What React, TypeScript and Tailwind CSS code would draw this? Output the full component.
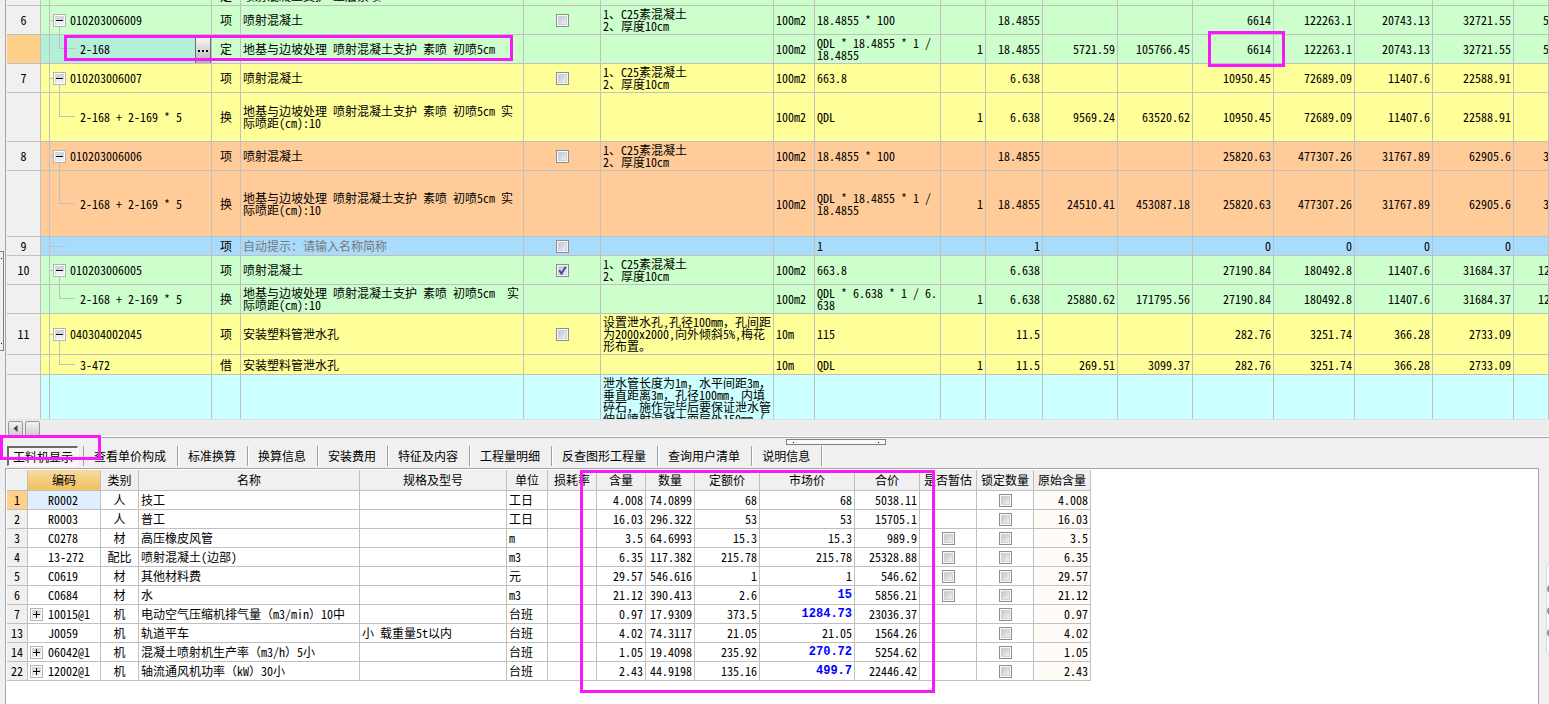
import React from "react";

type Tone = "green" | "yellow" | "orange" | "blue" | "cyan";

interface BillRow {
  no: string;
  tone: Tone;
  height: string;
  code: string;
  level: "parent" | "child" | "hint" | "none";
  kind: string;
  name: string;
  check?: boolean;
  hasCheck?: boolean;
  spec?: string;
  unit?: string;
  expr?: string;
  ratio?: string;
  qty?: string;
  nums: string[];
  tail?: string;
  selected?: boolean;
}

const tones: Record<Tone, string> = {
  green: "bg-[#ccffcc]",
  yellow: "bg-[#ffff99]",
  orange: "bg-[#ffcc99]",
  blue: "bg-[#a9dbfb]",
  cyan: "bg-[#ccffff]",
};

const concreteSpec = "1、C25素混凝土\n2、厚度10cm";
const shotcrete = "地基与边坡处理 喷射混凝土支护 素喷 初喷5㎝";

const billRows: BillRow[] = [
  { no: "", tone: "green", height: "h-5", code: "", level: "none", kind: "定", name: "喷射混凝土支护 土层素喷", nums: [] },
  { no: "6", tone: "green", height: "h-[29px]", code: "010203006009", level: "parent", kind: "项", name: "喷射混凝土", hasCheck: true, spec: concreteSpec, unit: "100m2", expr: "18.4855 * 100", qty: "18.4855", nums: ["", "", "6614", "122263.1", "20743.13", "32721.55"], tail: "5" },
  { no: "", tone: "green", height: "h-[29px]", code: "2-168", level: "child", kind: "定", name: shotcrete, unit: "100m2", expr: "QDL * 18.4855 * 1 /\n18.4855", ratio: "1", qty: "18.4855", nums: ["5721.59", "105766.45", "6614", "122263.1", "20743.13", "32721.55"], tail: "5", selected: true },
  { no: "7", tone: "yellow", height: "h-[29px]", code: "010203006007", level: "parent", kind: "项", name: "喷射混凝土", hasCheck: true, spec: concreteSpec, unit: "100m2", expr: "663.8", qty: "6.638", nums: ["", "", "10950.45", "72689.09", "11407.6", "22588.91"] },
  { no: "", tone: "yellow", height: "h-[49px]", code: "2-168 + 2-169 * 5", level: "child", kind: "换", name: shotcrete + " 实\n际喷距(cm):10", unit: "100m2", expr: "QDL", ratio: "1", qty: "6.638", nums: ["9569.24", "63520.62", "10950.45", "72689.09", "11407.6", "22588.91"] },
  { no: "8", tone: "orange", height: "h-[29px]", code: "010203006006", level: "parent", kind: "项", name: "喷射混凝土", hasCheck: true, spec: concreteSpec, unit: "100m2", expr: "18.4855 * 100", qty: "18.4855", nums: ["", "", "25820.63", "477307.26", "31767.89", "62905.6"], tail: "3" },
  { no: "", tone: "orange", height: "h-[66px]", code: "2-168 + 2-169 * 5", level: "child", kind: "换", name: shotcrete + " 实\n际喷距(cm):10", unit: "100m2", expr: "QDL * 18.4855 * 1 /\n18.4855", ratio: "1", qty: "18.4855", nums: ["24510.41", "453087.18", "25820.63", "477307.26", "31767.89", "62905.6"], tail: "3" },
  { no: "9", tone: "blue", height: "h-[19px]", code: "", level: "hint", kind: "项", name: "自动提示：请输入名称简称", hasCheck: true, expr: "1", qty: "1", nums: ["", "", "0", "0", "0", "0"] },
  { no: "10", tone: "green", height: "h-[29px]", code: "010203006005", level: "parent", kind: "项", name: "喷射混凝土", hasCheck: true, check: true, spec: concreteSpec, unit: "100m2", expr: "663.8", qty: "6.638", nums: ["", "", "27190.84", "180492.8", "11407.6", "31684.37"], tail: "12" },
  { no: "", tone: "green", height: "h-[29px]", code: "2-168 + 2-169 * 5", level: "child", kind: "换", name: shotcrete + "  实\n际喷距(cm):10", unit: "100m2", expr: "QDL * 6.638 * 1 / 6.\n638", ratio: "1", qty: "6.638", nums: ["25880.62", "171795.56", "27190.84", "180492.8", "11407.6", "31684.37"], tail: "12" },
  { no: "11", tone: "yellow", height: "h-[41px]", code: "040304002045", level: "parent", kind: "项", name: "安装塑料管泄水孔", hasCheck: true, spec: "设置泄水孔,孔径100mm，孔间距\n为2000x2000,向外倾斜5%,梅花\n形布置。", unit: "10m", expr: "115", qty: "11.5", nums: ["", "", "282.76", "3251.74", "366.28", "2733.09"] },
  { no: "", tone: "yellow", height: "h-5", code: "3-472", level: "child", kind: "借", name: "安装塑料管泄水孔", unit: "10m", expr: "QDL", ratio: "1", qty: "11.5", nums: ["269.51", "3099.37", "282.76", "3251.74", "366.28", "2733.09"] },
  { no: "", tone: "cyan", height: "h-[65px]", code: "", level: "none", kind: "", name: "", spec: "泄水管长度为1m，水平间距3m，\n垂直距离3m，孔径100mm，内填\n碎石，施作完毕后要保证泄水管\n伸出喷射混凝土面层外150mm（\n不含管长）。", nums: [] },
];

const tabs = ["查看单价构成", "标准换算", "换算信息", "安装费用", "特征及内容", "工程量明细", "反查图形工程量", "查询用户清单", "说明信息"];

interface Resource {
  no: string;
  code: string;
  expandable?: boolean;
  kind: string;
  name: string;
  model?: string;
  unit: string;
  content: string;
  qty: string;
  quota: string;
  market: string;
  changed?: boolean;
  total: string;
  provisional?: boolean;
}

const resources: Resource[] = [
  { no: "1", code: "R0002", kind: "人", name: "技工", unit: "工日", content: "4.008", qty: "74.0899", quota: "68", market: "68", total: "5038.11" },
  { no: "2", code: "R0003", kind: "人", name: "普工", unit: "工日", content: "16.03", qty: "296.322", quota: "53", market: "53", total: "15705.1" },
  { no: "3", code: "C0278", kind: "材", name: "高压橡皮风管", unit: "m", content: "3.5", qty: "64.6993", quota: "15.3", market: "15.3", total: "989.9", provisional: true },
  { no: "4", code: "13-272", kind: "配比", name: "喷射混凝土(边部)", unit: "m3", content: "6.35", qty: "117.382", quota: "215.78", market: "215.78", total: "25328.88", provisional: true },
  { no: "5", code: "C0619", kind: "材", name: "其他材料费", unit: "元", content: "29.57", qty: "546.616", quota: "1", market: "1", total: "546.62", provisional: true },
  { no: "6", code: "C0684", kind: "材", name: "水", unit: "m3", content: "21.12", qty: "390.413", quota: "2.6", market: "15", changed: true, total: "5856.21", provisional: true },
  { no: "7", code: "10015@1", expandable: true, kind: "机", name: "电动空气压缩机排气量（m3/min）10中", unit: "台班", content: "0.97", qty: "17.9309", quota: "373.5", market: "1284.73", changed: true, total: "23036.37" },
  { no: "13", code: "J0059", kind: "机", name: "轨道平车", model: "小 载重量5t以内", unit: "台班", content: "4.02", qty: "74.3117", quota: "21.05", market: "21.05", total: "1564.26" },
  { no: "14", code: "06042@1", expandable: true, kind: "机", name: "混凝土喷射机生产率（m3/h）5小", unit: "台班", content: "1.05", qty: "19.4098", quota: "235.92", market: "270.72", changed: true, total: "5254.62" },
  { no: "22", code: "12002@1", expandable: true, kind: "机", name: "轴流通风机功率（kW）30小", unit: "台班", content: "2.43", qty: "44.9198", quota: "135.16", market: "499.7", changed: true, total: "22446.42" },
];

const cell = "border-r border-b border-[#c0c0c0] p-0 overflow-hidden whitespace-pre";
const left = cell + " pl-[2px] text-left";
const right = cell + " pr-[2px] text-right";
const center = cell + " text-center";
const head = "border-r border-b border-[#c0c0c0] p-0 font-normal whitespace-nowrap text-center";

function Toggle({ open, label }: { open: boolean; label: string }) {
  return (
    <button
      type="button"
      aria-label={label}
      aria-expanded={open}
      className="relative block size-[13px] shrink-0 border border-[#b4b4b4] bg-white p-px"
    >
      <svg viewBox="0 0 9 9" className="block size-[9px]" shapeRendering="crispEdges" aria-hidden="true">
        <rect width="9" height="9" fill="#d3d6de" />
        <rect x="1" y="5" width="8" height="4" fill="#eceef1" />
        <rect x="1" y="4" width="7" height="1" fill="#000" />
        {!open && <rect x="4" y="1" width="1" height="7" fill="#000" />}
      </svg>
    </button>
  );
}

function Check({ label, checked }: { label: string; checked?: boolean }) {
  return (
    <span className="relative mx-auto block size-[13px]">
      <input
        type="checkbox"
        aria-label={label}
        defaultChecked={checked}
        className="peer block size-[13px] appearance-none border border-[#8e8f8f] bg-linear-to-br from-[#b4bcc8] to-[#fdfdfd] shadow-[inset_0_0_0_1px_#f8f8f8,inset_0_0_0_2px_#d0d3d8]"
      />
      <svg
        viewBox="0 0 13 13"
        aria-hidden="true"
        className="pointer-events-none absolute inset-0 hidden size-[13px] peer-checked:block"
      >
        <path d="M3.2 6.2 5.5 9.6 9.7 2.8" fill="none" stroke="#36509c" strokeWidth="2" />
      </svg>
    </span>
  );
}

function TreeCell({ row }: { row: BillRow }) {
  const bg = row.selected ? "bg-[#b4f0d8]" : "";
  if (row.level === "parent") {
    return (
      <td className={"relative " + left + " " + bg}>
        <span className="absolute top-1/2 bottom-0 left-[9px] w-px bg-[#c0c0c0]" />
        <span className="absolute top-1/2 left-0 h-px w-1 bg-[#c0c0c0]" />
        <div className="relative flex items-center gap-1 pl-px">
          <Toggle open label={"折叠 " + row.code} />
          <span>{row.code}</span>
        </div>
      </td>
    );
  }
  if (row.level === "child") {
    return (
      <td className={"relative " + left + " " + bg}>
        <span className="absolute top-0 left-[9px] h-1/2 w-4 border-b border-l border-[#c0c0c0]" />
        <span className="pl-7">{row.code}</span>
        {row.selected && (
          <button
            type="button"
            aria-label="选择定额"
            className="absolute top-[3px] right-0 flex h-[25px] w-4 items-center justify-center gap-[2px] border-x border-[#6e6e6e] bg-linear-to-b from-[#f6f6f6] to-[#b4b4b4]"
          >
            <i className="size-[2px] bg-black" />
            <i className="size-[2px] bg-black" />
            <i className="size-[2px] bg-black" />
          </button>
        )}
      </td>
    );
  }
  return (
    <td className={"relative " + left}>
      {row.level === "hint" && <span className="absolute top-1/2 left-0 h-px w-4 bg-[#c0c0c0]" />}
    </td>
  );
}

function BillTable() {
  return (
    <table className="-mt-[14px] w-full table-fixed border-separate border-spacing-0">
      <colgroup>
        <col className="w-[34px]" />
        <col className="w-[9px]" />
        <col className="w-[162px]" />
        <col className="w-[29px]" />
        <col className="w-[283px]" />
        <col className="w-[77px]" />
        <col className="w-[173px]" />
        <col className="w-[41px]" />
        <col className="w-[126px]" />
        <col className="w-[45px]" />
        <col className="w-[57px]" />
        <col className="w-[75px]" />
        <col className="w-[75px]" />
        <col className="w-[81px]" />
        <col className="w-[81px]" />
        <col className="w-[78px]" />
        <col className="w-[81px]" />
        <col />
      </colgroup>
      <tbody>
        {billRows.map((row, i) => (
          <tr key={i} className={tones[row.tone] + " " + row.height}>
            <th scope="row" className={head + (row.selected ? " bg-[#ffd08a]" : " bg-[#f0f0f0]")}>
              {row.no}
            </th>
            <td className={center + (row.selected ? " bg-[#b4f0d8]" : "")} />
            <TreeCell row={row} />
            <td className={center}>{row.kind}</td>
            <td className={left + (row.level === "hint" ? " text-[#7a7a7a]" : "")}>{row.name}</td>
            <td className={center}>
              {row.hasCheck && <Check label={"主要清单 " + row.no} checked={row.check} />}
            </td>
            <td className={left}>{row.spec}</td>
            <td className={left}>{row.unit}</td>
            <td className={left}>{row.expr}</td>
            <td className={right}>{row.ratio}</td>
            <td className={right}>{row.qty}</td>
            {Array.from({ length: 6 }, (_, n) => (
              <td key={n} className={right}>{row.nums[n]}</td>
            ))}
            <td className={cell + (row.tail === "12" ? " pl-6" : " pl-[29px]")}>{row.tail}</td>
          </tr>
        ))}
      </tbody>
    </table>
  );
}

function ResourceTable() {
  return (
    <table className="ml-px mt-px w-[1084px] table-fixed border-separate border-spacing-0">
      <colgroup>
        <col className="w-[21px]" />
        <col className="w-[73px]" />
        <col className="w-[38px]" />
        <col className="w-[221px]" />
        <col className="w-[147px]" />
        <col className="w-[41px]" />
        <col className="w-[49px]" />
        <col className="w-[49px]" />
        <col className="w-[49px]" />
        <col className="w-[65px]" />
        <col className="w-[95px]" />
        <col className="w-[65px]" />
        <col className="w-[57px]" />
        <col className="w-[57px]" />
        <col className="w-[57px]" />
      </colgroup>
      <thead>
        <tr className="h-[21px] bg-[#f0f0f0]">
          <th className={head} />
          <th className={head + " bg-linear-to-b from-[#f9d99f] to-[#f1c15f]"}>编码</th>
          {["类别", "名称", "规格及型号", "单位", "损耗率", "含量", "数量", "定额价", "市场价", "合价", "是否暂估", "锁定数量", "原始含量"].map((t) => (
            <th key={t} className={head}>{t}</th>
          ))}
        </tr>
      </thead>
      <tbody>
        {resources.map((r, i) => (
          <tr key={r.no} className="h-[19px]">
            <th scope="row" className={head + (i === 0 ? " bg-[#ffd08a]" : " bg-[#f0f0f0]")}>{r.no}</th>
            <td className={left + (i === 0 ? " bg-[#dfefff]" : "")}>
              <div className="flex items-center gap-[5px]">
                {r.expandable ? <Toggle open={false} label={"展开 " + r.code} /> : <span className="w-[13px]" />}
                <span>{r.code}</span>
              </div>
            </td>
            <td className={center}>{r.kind}</td>
            <td className={left}>{r.name}</td>
            <td className={left}>{r.model}</td>
            <td className={left}>{r.unit}</td>
            <td className={left} />
            <td className={right}>{r.content}</td>
            <td className={right}>{r.qty}</td>
            <td className={right}>{r.quota}</td>
            <td className={right + (r.changed ? " font-['Liberation_Mono',monospace] font-bold text-[#0000ff]" : "")}>{r.market}</td>
            <td className={right}>{r.total}</td>
            <td className={center}>{r.provisional && <Check label={"是否暂估 " + r.code} />}</td>
            <td className={center}><Check label={"锁定数量 " + r.code} /></td>
            <td className={right + " bg-[#fffbf6]"}>{r.content}</td>
          </tr>
        ))}
      </tbody>
    </table>
  );
}

export default function App() {
  return (
    <div className="flex h-screen flex-col overflow-hidden bg-[#f0f0f0] font-['Noto_Sans_Mono_CJK_SC','DejaVu_Sans_Mono','Noto_Sans_CJK_SC',monospace] text-[12px] leading-[12px] text-black">
      <main className="relative flex min-h-0 flex-1">
        <div className="flex w-[5px] shrink-0 items-end pb-[86px]">
          <div className="flex h-[100px] w-1 flex-col items-start justify-between border border-l-0 border-[#808080] py-[6px] pl-px">
            <i className="size-px bg-[#000080]" />
            <i className="size-px bg-[#000080]" />
          </div>
        </div>
        <section className="flex min-w-0 flex-1 flex-col border-l border-[#a7a6aa] pl-px">
          <div className="min-h-0 flex-1 overflow-hidden">
            <BillTable />
          </div>
          <div className="flex h-[18px] shrink-0 items-center gap-[2px] border-t border-b border-t-[#e0e0e0] border-b-white bg-[#ececec] pl-px">
            <button
              type="button"
              aria-label="向左滚动"
              className="flex size-[15px] items-center justify-center rounded-[2px] border border-[#979797] bg-linear-to-b from-[#f3f3f3] to-[#cfcfcf]"
            >
              <svg viewBox="0 0 5 7" className="h-[7px] w-[5px]" aria-hidden="true">
                <path d="M4.5 0v7L.5 3.5z" fill="#404040" />
              </svg>
            </button>
            <button
              type="button"
              aria-label="滚动滑块"
              className="size-[15px] rounded-[2px] border border-[#979797] bg-linear-to-b from-[#f3f3f3] to-[#cfcfcf]"
            />
          </div>
        </section>
        <div className="pointer-events-none absolute top-[35px] left-16 h-[26px] w-[449px] border-3 border-[#f719f7]" />
        <div className="pointer-events-none absolute top-[31px] left-[1208px] h-[36px] w-[77px] border-3 border-[#f719f7]" />
      </main>

      <footer className="relative flex h-[267px] shrink-0 flex-col border-t border-[#a7a6aa]">
        <div className="absolute top-[1px] left-[786px] flex h-[6px] w-[100px] items-center justify-between border border-[#808080] bg-[#f8f8f8] px-[6px]">
          <i className="size-px bg-[#000080]" />
          <i className="size-px bg-[#000080]" />
        </div>
        <nav className="flex h-[30px] shrink-0 items-start pt-2 pl-[7px]" aria-label="明细">
          <button
            type="button"
            className="mr-[5px] h-5 w-[71px] border-t-2 border-l-2 border-r border-b border-[#6a6a6a] border-r-white border-b-white bg-[repeating-conic-gradient(#ffffff_0%_25%,#ececec_0%_50%)] bg-size-[2px_2px]"
          >
            工料机显示
          </button>
          <span className="h-5 w-px bg-[#a0a0a0]" />
          {tabs.map((t) => (
            <button
              key={t}
              type="button"
              className="h-5 border-r border-[#a0a0a0] pr-[11px] pl-[10px] whitespace-nowrap shadow-[1px_0_white]"
            >
              {t}
            </button>
          ))}
        </nav>
        <div className="flex min-h-0 flex-1">
          <section className="ml-[5px] min-w-0 flex-1 border-t border-r border-l border-[#a7a6aa] bg-white">
            <ResourceTable />
          </section>
          <div className="w-[10px] shrink-0 overflow-hidden pt-[96px] pl-[7px]">
            <div className="flex h-[90px] w-5 flex-col gap-[14px] rounded-[3px] border border-[#d3dfe8] bg-[#fafafa] pt-[20px]">
              <i className="size-2 rounded-full border-2 border-[#8e8f8f]" />
              <i className="size-2 rounded-full border-2 border-[#8e8f8f]" />
              <i className="size-2 rounded-full border-2 border-[#8e8f8f]" />
            </div>
          </div>
        </div>
        <div className="pointer-events-none absolute -top-[3px] left-0 h-[25px] w-[101px] border-3 border-[#f719f7]" />
        <div className="pointer-events-none absolute top-8 left-[580px] h-[223px] w-[355px] border-3 border-[#f719f7]" />
      </footer>
    </div>
  );
}
